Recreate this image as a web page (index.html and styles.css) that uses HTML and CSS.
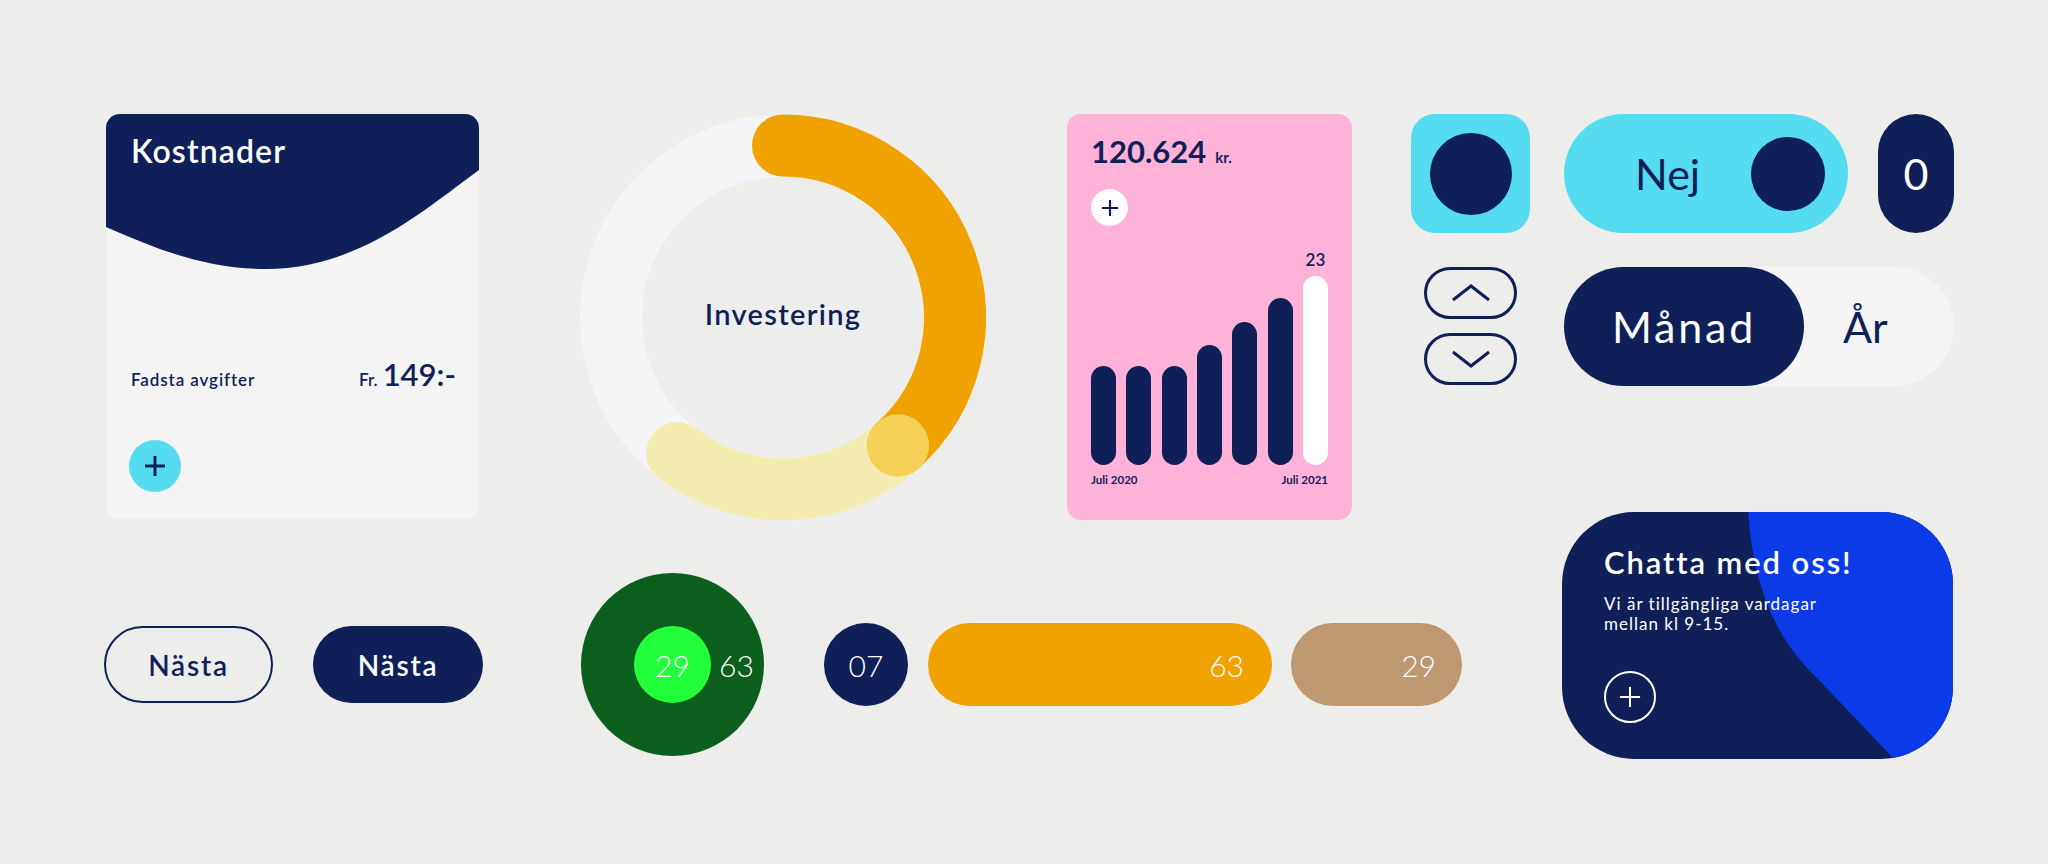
FILE: index.html
```html
<!DOCTYPE html>
<html lang="sv">
<head>
<meta charset="utf-8">
<title>UI Kit</title>
<link rel="stylesheet" href="styles.css">
</head>
<body>
<main class="page">
  <section class="row-top">
    <article class="cost-card">
      <svg class="cost-wave" viewBox="0 0 373 160" width="373" height="160" aria-hidden="true">
        <path d="M0,0 H373 V56 C318,96 252,155 160,155 C96,155 44,132 0,113 Z" fill="#0f1f58"/>
      </svg>
      <h2 class="cost-title">Kostnader</h2>
      <div class="cost-row">
        <span class="cost-label">Fadsta avgifter</span>
        <span class="cost-price"><span class="cost-fr">Fr.</span><span class="cost-amount">149:-</span></span>
      </div>
      <button class="round-plus cyan" aria-label="Lägg till">
        <svg viewBox="0 0 24 24" width="24" height="24"><path d="M12 2v20M2 12h20" stroke="#0f1f58" stroke-width="3" fill="none"/></svg>
      </button>
    </article>

    <div class="donut">
      <svg class="donut-svg" viewBox="0 0 406 407" width="406" height="407" aria-hidden="true">
        <circle cx="203" cy="203.5" r="172" fill="none" stroke="#f4f5f6" stroke-width="62"/>
        <path d="M318.1,331.3 A172,172 0 0 1 97.1,339" fill="none" stroke="#f3ecb0" stroke-width="62" stroke-linecap="round"/>
        <path d="M203,31.5 A172,172 0 0 1 318.1,331.3" fill="none" stroke="#f0a300" stroke-width="62" stroke-linecap="round"/>
        <circle cx="318.1" cy="331.3" r="31" fill="#f5d157"/>
      </svg>
      <span class="donut-label">Investering</span>
    </div>

    <article class="pink-card">
      <div class="pink-head"><span class="pink-amount">120.624</span><span class="pink-unit">kr.</span></div>
      <button class="round-plus white" aria-label="Lägg till">
        <svg viewBox="0 0 20 20" width="18" height="18"><path d="M10 1v18M1 10h18" stroke="#0f1f58" stroke-width="2.4" fill="none"/></svg>
      </button>
      <div class="bars">
        <div class="bar" style="height:99px"></div>
        <div class="bar" style="height:99px"></div>
        <div class="bar" style="height:99px"></div>
        <div class="bar" style="height:120px"></div>
        <div class="bar" style="height:143px"></div>
        <div class="bar" style="height:167px"></div>
        <div class="bar-col">
          <span class="bar-value">23</span>
          <div class="bar current" style="height:189px"></div>
        </div>
      </div>
      <div class="bar-labels"><span>Juli 2020</span><span>Juli 2021</span></div>
    </article>

    <div class="controls">
      <div class="knob-square"><span class="knob"></span></div>
      <div class="ctrl-line">
        <div class="toggle"><span class="toggle-text">Nej</span><span class="toggle-knob"></span></div>
        <div class="zero-pill">0</div>
      </div>
      <div class="steppers">
        <button class="stepper" aria-label="Upp">
          <svg viewBox="0 0 40 18" width="40" height="18"><path d="M2 16 L20 2 L38 16" stroke="#0f1f58" stroke-width="3" fill="none"/></svg>
        </button>
        <button class="stepper" aria-label="Ner">
          <svg viewBox="0 0 40 18" width="40" height="18"><path d="M2 2 L20 16 L38 2" stroke="#0f1f58" stroke-width="3" fill="none"/></svg>
        </button>
      </div>
      <div class="segment">
        <span class="seg-active">Månad</span>
        <span class="seg-item">År</span>
      </div>
    </div>
  </section>

  <section class="row-bottom">
    <div class="pill-group">
      <button class="btn-outline">Nästa</button>
      <button class="btn-filled">Nästa</button>
      <div class="green-ring">
        <span class="green-dot">29</span>
        <span class="green-side">63</span>
      </div>
      <div class="num-dot">07</div>
      <div class="num-pill orange">63</div>
      <div class="num-pill tan">29</div>
    </div>

    <article class="chat-card">
      <svg class="chat-shape" viewBox="0 0 391 247" width="391" height="247" aria-hidden="true">
        <path d="M186,-2 C191,70 210,121 252,163 L334,249 H400 V-2 Z" fill="#0a3be6"/>
      </svg>
      <div class="chat-body">
        <h2 class="chat-title">Chatta med oss!</h2>
        <p class="chat-text">Vi är tillgängliga vardagar<br>mellan kl 9-15.</p>
        <button class="chat-plus" aria-label="Starta chatt">
          <svg viewBox="0 0 24 24" width="22" height="22"><path d="M12 1v22M1 12h22" stroke="#ffffff" stroke-width="2.2" fill="none"/></svg>
        </button>
      </div>
    </article>
  </section>
</main>
</body>
</html>
```

FILE: styles.css
```css
* { box-sizing: border-box; }

html, body {
  margin: 0;
  padding: 0;
}

body {
  width: 2048px;
  height: 864px;
  overflow: hidden;
  background: #edeeeb;
  font-family: "Lato", "Noto Sans", "Liberation Sans", sans-serif;
  color: #0f1f58;
}

button {
  font-family: inherit;
  border: 0;
  padding: 0;
  background: none;
  cursor: pointer;
}

.page {
  padding: 114px 0 0 106px;
}

/* ---------- top row ---------- */
.row-top {
  display: flex;
  align-items: flex-start;
  height: 407px;
}

.cost-card {
  position: relative;
  width: 373px;
  height: 405px;
  margin-right: 101px;
  padding: 18px 23px 25px 25px;
  background: #f4f4f5;
  border-radius: 14px;
  overflow: hidden;
  display: flex;
  flex-direction: column;
}

.cost-wave {
  position: absolute;
  top: 0;
  left: 0;
}

.cost-title {
  position: relative;
  margin: 0;
  font-size: 32px;
  line-height: 38px;
  font-weight: 600;
  color: #ffffff;
  letter-spacing: 1.1px;
}

.cost-row {
  display: flex;
  justify-content: space-between;
  align-items: baseline;
  margin-top: 186px;
  height: 36px;
}

.cost-label {
  font-size: 17px;
  font-weight: 600;
  letter-spacing: 0.9px;
}

.cost-price {
  display: flex;
  align-items: baseline;
  gap: 5px;
}

.cost-fr {
  font-size: 17px;
  font-weight: 600;
}

.cost-amount {
  font-size: 31px;
  line-height: 36px;
  font-weight: 600;
}

.round-plus {
  display: flex;
  align-items: center;
  justify-content: center;
  border-radius: 50%;
}

.round-plus.cyan {
  width: 52px;
  height: 52px;
  margin-top: 48px;
  margin-left: -2px;
  background: #55dcf0;
}

.round-plus.white {
  width: 37px;
  height: 37px;
  margin-top: 20px;
  background: #ffffff;
}

/* donut */
.donut {
  display: grid;
  place-items: center;
  width: 406px;
  height: 407px;
  margin-right: 81px;
}

.donut > * {
  grid-area: 1 / 1;
}

.donut-label {
  padding-bottom: 8px;
  font-size: 29px;
  font-weight: 600;
  letter-spacing: 1.3px;
}

/* pink card */
.pink-card {
  width: 285px;
  height: 406px;
  margin-right: 59px;
  padding: 19px 24px 0 24px;
  background: #ffb3d9;
  border-radius: 14px;
  display: flex;
  flex-direction: column;
}

.pink-head {
  display: flex;
  align-items: baseline;
  gap: 9px;
  height: 36px;
}

.pink-amount {
  font-size: 31px;
  line-height: 36px;
  font-weight: 700;
}

.pink-unit {
  font-size: 15px;
  font-weight: 700;
}

.bars {
  display: flex;
  align-items: flex-end;
  justify-content: space-between;
  height: 216px;
  margin-top: 23px;
}

.bar {
  width: 25px;
  border-radius: 13px;
  background: #0f1f58;
}

.bar.current {
  background: #ffffff;
}

.bar-col {
  display: flex;
  flex-direction: column;
  align-items: center;
  gap: 6px;
}

.bar-value {
  font-size: 17px;
  line-height: 20px;
  font-weight: 600;
}

.bar-labels {
  display: flex;
  justify-content: space-between;
  margin-top: 8px;
  font-size: 11.5px;
  font-weight: 700;
  line-height: 14px;
}

/* controls */
.controls {
  display: grid;
  grid-template-columns: 119px 390px;
  column-gap: 34px;
  row-gap: 34px;
}

.knob-square {
  width: 119px;
  height: 119px;
  border-radius: 24px;
  background: #55dcf0;
  display: flex;
  align-items: center;
  justify-content: center;
}

.knob {
  width: 82px;
  height: 82px;
  border-radius: 50%;
  background: #0f1f58;
}

.ctrl-line {
  display: flex;
  justify-content: space-between;
}

.toggle {
  width: 284px;
  height: 119px;
  border-radius: 60px;
  background: #55dcf0;
  display: flex;
  align-items: center;
  justify-content: space-between;
  padding: 0 23px 0 71px;
}

.toggle-text {
  font-size: 43px;
  font-weight: 400;
}

.toggle-knob {
  width: 74px;
  height: 74px;
  border-radius: 50%;
  background: #0f1f58;
}

.zero-pill {
  width: 76px;
  height: 119px;
  border-radius: 38px;
  background: #0f1f58;
  color: #ffffff;
  font-size: 43px;
  font-weight: 400;
  display: flex;
  align-items: center;
  justify-content: center;
}

.steppers {
  display: flex;
  flex-direction: column;
  align-items: center;
  gap: 14px;
}

.stepper {
  width: 93px;
  height: 52px;
  border: 3px solid #0f1f58;
  border-radius: 26px;
  display: flex;
  align-items: center;
  justify-content: center;
}

.segment {
  width: 390px;
  height: 119px;
  border-radius: 60px;
  background: #f4f4f5;
  display: flex;
  align-items: center;
}

.seg-active {
  width: 240px;
  height: 119px;
  border-radius: 60px;
  background: #0f1f58;
  color: #ffffff;
  font-size: 43px;
  font-weight: 400;
  letter-spacing: 2.8px;
  display: flex;
  align-items: center;
  justify-content: center;
}

.seg-item {
  margin-left: 39px;
  font-size: 43px;
  font-weight: 400;
}

/* ---------- bottom row ---------- */
.row-bottom {
  display: flex;
  align-items: flex-start;
}

.pill-group {
  display: flex;
  align-items: center;
  margin-top: 52px;
}

.btn-outline,
.btn-filled {
  height: 77px;
  border-radius: 39px;
  font-size: 28px;
  font-weight: 600;
  letter-spacing: 1.8px;
}

.btn-outline {
  width: 169px;
  margin-left: -2px;
  border: 2.5px solid #0f1f58;
  color: #0f1f58;
}

.btn-filled {
  width: 170px;
  margin-left: 40px;
  background: #0f1f58;
  color: #ffffff;
}

.green-ring {
  width: 183px;
  height: 183px;
  margin-left: 98px;
  border-radius: 50%;
  background: #0b5e1b;
  display: grid;
  grid-template-columns: 1fr 77px 1fr;
  align-items: center;
  color: #ffffff;
  font-size: 30px;
  font-weight: 300;
}

.green-dot {
  grid-column: 2;
  width: 77px;
  height: 77px;
  border-radius: 50%;
  background: #22ff3b;
  display: flex;
  align-items: center;
  justify-content: center;
}

.green-side {
  grid-column: 3;
  margin-left: 8px;
}

.num-dot {
  width: 84px;
  height: 83px;
  margin-left: 60px;
  border-radius: 50%;
  background: #0f1f58;
  color: #ffffff;
  font-size: 30px;
  font-weight: 300;
  display: flex;
  align-items: center;
  justify-content: center;
}

.num-pill {
  height: 83px;
  border-radius: 42px;
  color: #ffffff;
  font-size: 30px;
  font-weight: 300;
  display: flex;
  align-items: center;
  justify-content: flex-end;
}

.num-pill.orange {
  width: 344px;
  margin-left: 20px;
  padding-right: 28px;
  background: #f0a300;
}

.num-pill.tan {
  width: 171px;
  margin-left: 19px;
  padding-right: 26px;
  background: #bd9870;
}

/* chat card */
.chat-card {
  position: relative;
  width: 391px;
  height: 247px;
  margin-top: -9px;
  margin-left: 100px;
  border-radius: 72px;
  background: #0f1f58;
  overflow: hidden;
}

.chat-shape {
  position: absolute;
  top: 0;
  left: 0;
}

.chat-body {
  position: relative;
  padding: 32px 0 0 42px;
  color: #ffffff;
}

.chat-title {
  margin: 0;
  font-size: 31px;
  line-height: 37px;
  font-weight: 600;
  letter-spacing: 1.9px;
}

.chat-text {
  margin: 13px 0 0;
  font-size: 17px;
  line-height: 20.3px;
  font-weight: 400;
  letter-spacing: 1px;
}

.chat-plus {
  margin-top: 36px;
  width: 52px;
  height: 52px;
  border: 2px solid #ffffff;
  border-radius: 50%;
  display: flex;
  align-items: center;
  justify-content: center;
}
```
